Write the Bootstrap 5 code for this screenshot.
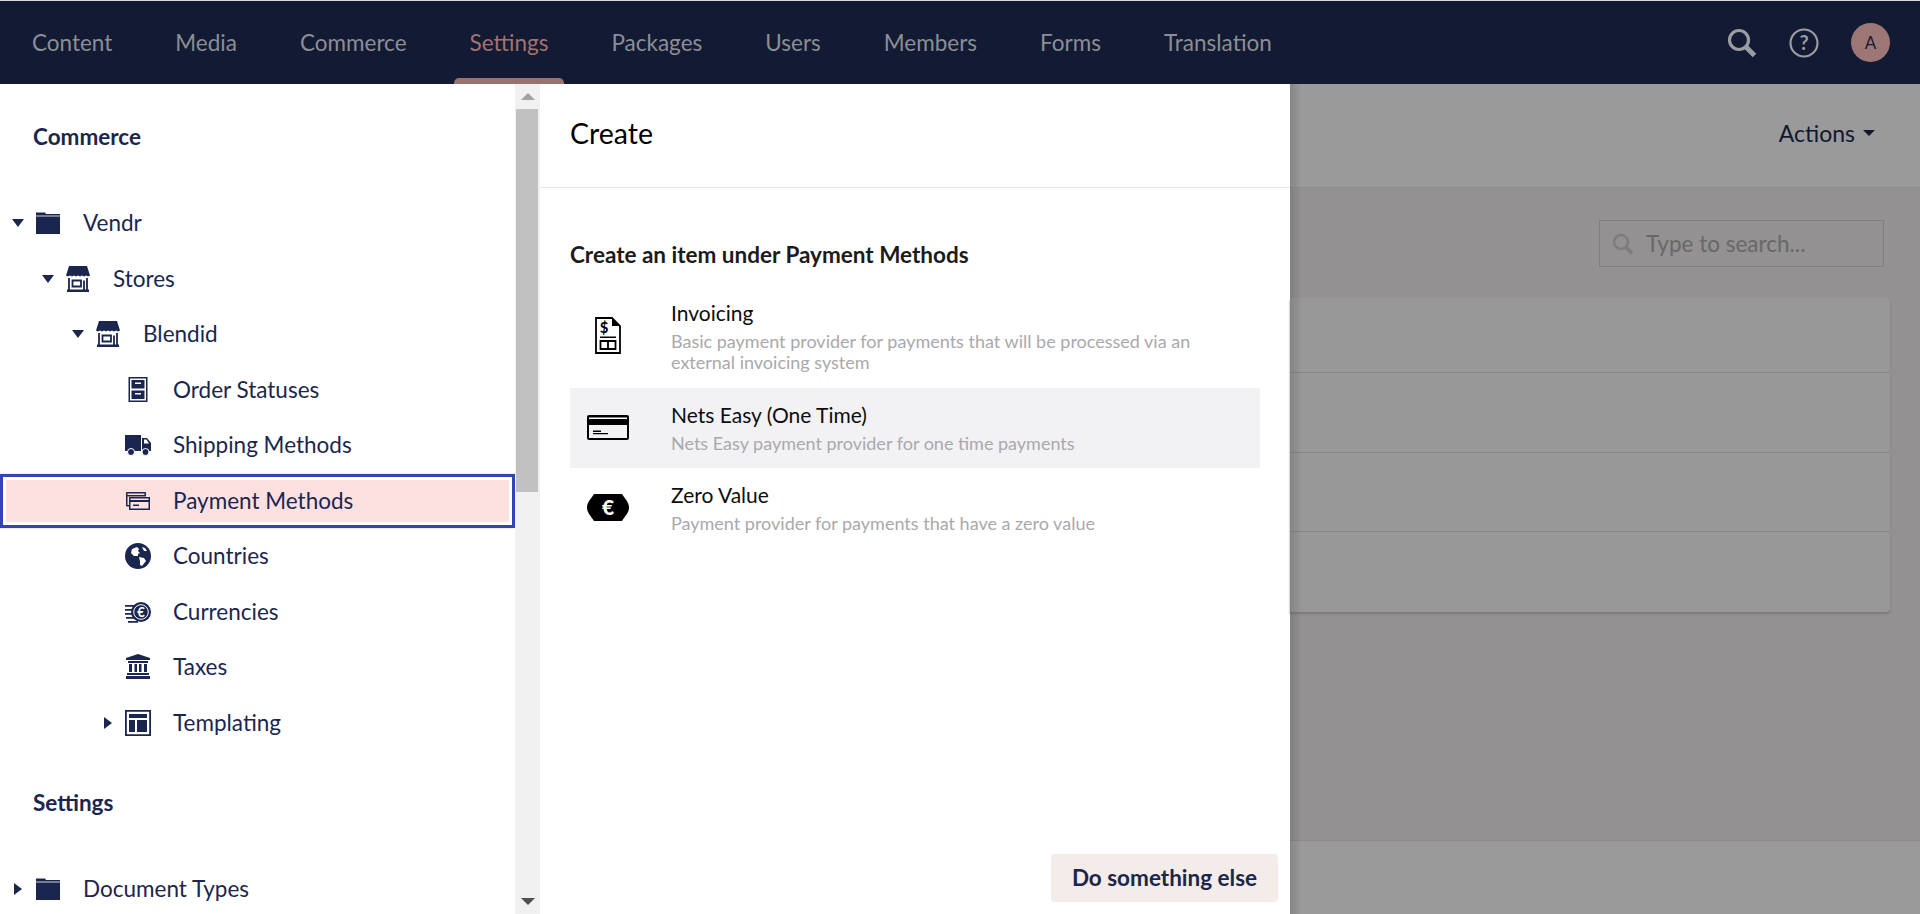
<!doctype html>
<html lang="en">
<head>
<meta charset="utf-8">
<title>Commerce – Create</title>
<link href="https://cdn.jsdelivr.net/npm/bootstrap@5.3.0/dist/css/bootstrap.min.css" rel="stylesheet">
<style>
html,body{height:100%;}
body{font-family:Lato,"Open Sans",sans-serif;overflow:hidden;background:#939191;color:#1b264f;}
.topbar{height:84px;background:#131a33;border-top:1px solid #d9d9d9;flex:none;}
.top-link{font-size:22.5px;color:#8c8e95;text-decoration:none;position:relative;height:83px;display:flex;align-items:center;}
.top-link.is-on{color:#a2736f;}
.top-link.is-on::after{content:"";position:absolute;left:-16px;right:-16px;bottom:0;height:6px;background:#9b716f;border-radius:5px 5px 0 0;}
.top-nav{padding-left:32px;gap:63px;}
.top-tools{gap:32px;padding-right:30px;}
.who{width:39px;height:39px;border-radius:50%;background:#9c7775;color:#131a33;font-size:17px;}
.work{min-height:0;}
.tree-side{width:515px;flex:none;background:#fff;overflow:hidden;}
.tree-title{font-size:22.5px;font-weight:700;padding-left:33px;line-height:26px;}
.tree-title.t1{margin-top:40px;margin-bottom:45.500px;}
.tree-title.t2{margin-top:39px;margin-bottom:46px;}
.tree-row{height:55.5px;font-size:22.5px;color:#1b264f;}
.tree-row.on{height:54px;margin:.75px 0;background:#fde1e1;box-shadow:inset 0 0 0 3px #3544b1,inset 0 0 0 6px #fff,0 0 2px #c5c9ea;position:relative;}
.lv0{padding-left:12px;}.lv1{padding-left:42px;}.lv2{padding-left:72px;}.lv3{padding-left:102px;}
.tw{width:12px;flex:none;margin-right:11px;display:flex;justify-content:center;}
.tico{width:26px;height:26px;flex:none;margin-right:22px;fill:#1b264f;}
.scroll-track{width:25px;flex:none;background:#f1f1f1;}
.scroll-up{height:25px;}
.scroll-thumb{height:383px;background:#c1c1c1;margin:0 2px 0 1px;}
.scroll-end{height:25px;margin-top:auto;}
.tri-u{border-left:7px solid transparent;border-right:7px solid transparent;border-bottom:7px solid #a3a3a3;}
.tri-d{border-left:7px solid transparent;border-right:7px solid transparent;border-top:7px solid #505050;}
.slide-panel{width:750px;flex:none;background:#fff;color:#000;}
.slide-head{height:104px;border-bottom:1px solid #e9e9eb;padding-left:30px;font-size:28.5px;line-height:32px;padding-bottom:5px;}
.slide-body{padding:0 30px;}
.under{font-size:22.5px;font-weight:700;color:#1b1b1b;margin:52px 0 20px;line-height:30px;}
.opt{height:80px;padding-bottom:2px;}
.opt.hot{background:#f2f2f4;}
.opt.first{height:98px;padding-bottom:7px;}
.opt-ico{width:101px;flex:none;display:flex;justify-content:center;padding-right:26px;}
.opt-name{font-size:21px;line-height:30px;color:#0d0d0d;margin-bottom:3px;}
.opt-desc{font-size:18px;line-height:21px;color:#a9a9ab;}
.do-else{background:#f3ece8;color:#1b264f;font-size:22.5px;font-weight:700;width:227px;height:48px;border:0;border-radius:4px;padding:0;}
.slide-foot{padding:0 12px 12px 0;}
.rest{background:#939191;position:relative;}
.rest::before{content:"";position:absolute;top:0;bottom:0;left:0;width:12px;background:linear-gradient(90deg,rgba(0,0,0,.13),rgba(0,0,0,0));}
.rest-head{height:104px;background:#9a9a9a;border-bottom:1px solid #8d8d8d;padding-right:45px;flex:none;}
.act{font-size:23px;color:#12172d;gap:8px;padding-bottom:5px;}
.act-tri{border-left:6px solid transparent;border-right:6px solid transparent;border-top:6px solid #12172d;}
.find-wrap{padding:32px 36px 31px 0;}
.find{width:285px;height:47px;border:1px solid #7f7f80;gap:12px;padding-left:12px;color:#686868;font-size:22.5px;}
.sheet{background:#989898;margin-right:30px;border-radius:0 4px 4px 0;box-shadow:0 2px 2px #7b7b7b;}
.sheet-row{border-bottom:1px solid #878787;}
.sheet-row:last-child{border-bottom:0;}
.sr1{height:75px;}.sr2{height:80px;}.sr3{height:79px;}.sr4{height:80px;}
.rest-foot{height:74px;background:#9a9a9a;border-top:1px solid #8b8b8b;margin-top:auto;flex:none;}
</style>
</head>
<body class="d-flex flex-column">
<header class="topbar d-flex justify-content-between align-items-center">
  <nav class="top-nav d-flex">
    <a class="top-link" href="#">Content</a>
    <a class="top-link" href="#">Media</a>
    <a class="top-link" href="#">Commerce</a>
    <a class="top-link is-on" href="#">Settings</a>
    <a class="top-link" href="#">Packages</a>
    <a class="top-link" href="#">Users</a>
    <a class="top-link" href="#">Members</a>
    <a class="top-link" href="#">Forms</a>
    <a class="top-link" href="#">Translation</a>
  </nav>
  <div class="top-tools d-flex align-items-center">
    <svg width="30" height="30" viewBox="0 0 30 30" aria-hidden="true"><circle cx="12" cy="12" r="9.5" fill="none" stroke="#9b9ca1" stroke-width="3.200"/><path d="M19 19l8.500 8.500" stroke="#9b9ca1" stroke-width="5"/></svg>
    <svg width="30" height="30" viewBox="0 0 30 30" aria-hidden="true"><circle cx="15" cy="15" r="13.500" fill="none" stroke="#9b9ca1" stroke-width="2.200"/><text x="15" y="22" text-anchor="middle" font-family="Lato,sans-serif" font-size="20" font-weight="700" fill="#9b9ca1">?</text></svg>
    <div class="who d-flex align-items-center justify-content-center">A</div>
  </div>
</header>
<main class="work d-flex flex-grow-1">
  <aside class="tree-side">
    <div class="tree-title t1">Commerce</div>
    <ul class="list-unstyled m-0">
      <li class="tree-row lv0 d-flex align-items-center"><span class="tw"><svg width="12" height="8" viewBox="0 0 12 8"><path d="M0 0h12L6 8z" fill="#1b264f"/></svg></span><svg class="tico" viewBox="0 0 26 26"><path d="M1 2.500h9l1 1.500h14v20H1z"/><path d="M1 6h24" stroke="#fff" stroke-width=".8"/></svg>Vendr</li>
      <li class="tree-row lv1 d-flex align-items-center"><span class="tw"><svg width="12" height="8" viewBox="0 0 12 8"><path d="M0 0h12L6 8z" fill="#1b264f"/></svg></span><svg class="tico" viewBox="0 0 26 26"><path d="M4 0h18l3 9.500-2 1-2-1-2 1-2-1-2 1-2-1-2 1-2-1-2 1-2-1-2 1-2-1z"/><path d="M4 12v12M22 12v12M7.500 14.500h8.500v6H7.500zM19 14.500V24" fill="none" stroke="#1b264f" stroke-width="1.800"/><path d="M2 23.500h22V26H2z"/></svg>Stores</li>
      <li class="tree-row lv2 d-flex align-items-center"><span class="tw"><svg width="12" height="8" viewBox="0 0 12 8"><path d="M0 0h12L6 8z" fill="#1b264f"/></svg></span><svg class="tico" viewBox="0 0 26 26"><path d="M4 0h18l3 9.500-2 1-2-1-2 1-2-1-2 1-2-1-2 1-2-1-2 1-2-1-2 1-2-1z"/><path d="M4 12v12M22 12v12M7.500 14.500h8.500v6H7.500zM19 14.500V24" fill="none" stroke="#1b264f" stroke-width="1.800"/><path d="M2 23.500h22V26H2z"/></svg>Blendid</li>
      <li class="tree-row lv3 d-flex align-items-center"><span class="tw"></span><svg class="tico" viewBox="0 0 26 26"><path fill-rule="evenodd" d="M3.500 0h19v25h-19zM5 1.500v22h16v-22zM6.500 3h13v8.500h-13zM6.500 13.500h13V22h-13z"/><path d="M10 5.500h6v1.500h-6zM10 16h6v1.500h-6z" fill="#fff"/></svg>Order Statuses</li>
      <li class="tree-row lv3 d-flex align-items-center"><span class="tw"></span><svg class="tico" viewBox="0 0 26 26"><path d="M0 3h16v16H0zM17 6h5l4 5v8h-9z"/><path d="M19 7.500h2.500l2.500 4h-5z" fill="#fff"/><circle cx="6" cy="20" r="3.500" stroke="#fff"/><circle cx="20.500" cy="20" r="3.500" stroke="#fff"/></svg>Shipping Methods</li>
      <li class="tree-row on lv3 d-flex align-items-center"><span class="tw"></span><svg class="tico" viewBox="0 0 26 26"><path d="M1 5q0-1 1-1h18q1 0 1 1v3h-1.500V5.500h-17V17H4v1.500H2q-1 0-1-1z"/><path d="M1 7h20v1.500H1z"/><path fill-rule="evenodd" d="M4 9h21v13H4zM5.500 14v6.500h18V14zM5.500 10.500V12h18v-1.500z"/><path d="M8 16.500h6V18H8z"/></svg>Payment Methods</li>
      <li class="tree-row lv3 d-flex align-items-center"><span class="tw"></span><svg class="tico" viewBox="0 0 26 26"><circle cx="13" cy="13" r="13"/><path d="M7 6l5-2 2 2-1 2 2 2-2 1v2l-4 0-3-3zM14 14l5 1 2 3-4 5-2-1v-4zM17 4l3 1 2 3-3 0-1-2z" fill="#fff"/></svg>Countries</li>
      <li class="tree-row lv3 d-flex align-items-center"><span class="tw"></span><svg class="tico" viewBox="0 0 26 26"><path d="M0 6h9v1.800H0zM0 10h7v1.800H0zM0 14h7v1.800H0zM1 18h8v1.800H1zM3 22h10v1.800H3z"/><circle cx="16" cy="13" r="10"/><circle cx="16" cy="13" r="7.300" fill="none" stroke="#fff" stroke-width="1"/><text x="16" y="18" text-anchor="middle" font-family="Lato,sans-serif" font-size="13" font-weight="700" fill="#fff">€</text></svg>Currencies</li>
      <li class="tree-row lv3 d-flex align-items-center"><span class="tw"></span><svg class="tico" viewBox="0 0 26 26"><path d="M13 0l12 4v2H1V4zM3 7h20v2H3zM4 10h3v8H4zM9.500 10h2.500v8H9.500zM14 10h2.500v8H14zM19 10h3v8h-3zM2 19h22v2H2zM1 22h24v3H1z"/></svg>Taxes</li>
      <li class="tree-row lv3 d-flex align-items-center"><span class="tw"><svg width="8" height="12" viewBox="0 0 8 12"><path d="M0 0l8 6-8 6z" fill="#1b264f"/></svg></span><svg class="tico" viewBox="0 0 26 26"><path fill-rule="evenodd" d="M0 0h26v26H0zM1.800 1.800v22.400h22.400V1.800z"/><path d="M4 4h18v4H4zM4 10h6v12H4zM12 10h10v12H12z"/></svg>Templating</li>
    </ul>
    <div class="tree-title t2">Settings</div>
    <ul class="list-unstyled m-0">
      <li class="tree-row lv0 d-flex align-items-center"><span class="tw"><svg width="8" height="12" viewBox="0 0 8 12"><path d="M0 0l8 6-8 6z" fill="#1b264f"/></svg></span><svg class="tico" viewBox="0 0 26 26"><path d="M1 2.500h9l1 1.500h14v20H1z"/><path d="M1 6h24" stroke="#fff" stroke-width=".8"/></svg>Document Types</li>
    </ul>
  </aside>
  <div class="scroll-track d-flex flex-column">
    <div class="scroll-up d-flex align-items-center justify-content-center"><span class="tri-u"></span></div>
    <div class="scroll-thumb"></div>
    <div class="scroll-end d-flex align-items-center justify-content-center"><span class="tri-d"></span></div>
  </div>
  <section class="slide-panel d-flex flex-column">
    <div class="slide-head d-flex align-items-center">Create</div>
    <div class="slide-body flex-grow-1">
      <div class="under">Create an item under Payment Methods</div>
      <div class="opt first d-flex align-items-center">
        <div class="opt-ico"><svg width="26" height="37" viewBox="0 0 26 37"><path d="M1 1h16l8 8v27H1z" fill="#fff" stroke="#000" stroke-width="1.800"/><path d="M17 1v8h8z"/><text x="9" y="16" text-anchor="middle" font-family="Lato,sans-serif" font-size="15" font-weight="700">$</text><path d="M5 19.500h16v1.500H5z"/><path d="M5.500 24h15v8h-15zM13 24v8" fill="none" stroke="#000" stroke-width="1.800"/></svg></div>
        <div><div class="opt-name">Invoicing</div><div class="opt-desc">Basic payment provider for payments that will be processed via an<br>external invoicing system</div></div>
      </div>
      <div class="opt hot d-flex align-items-center">
        <div class="opt-ico"><svg width="42" height="25" viewBox="0 0 42 25"><rect width="42" height="25" rx="2"/><path d="M2 2.500h38v1.500H2z" fill="#fff"/><path d="M2 10h38v13H2z" fill="#f2f2f4"/><path d="M6 15.500h8V17H6zM6 18h15v1.200H6z"/></svg></div>
        <div><div class="opt-name">Nets Easy (One Time)</div><div class="opt-desc">Nets Easy payment provider for one time payments</div></div>
      </div>
      <div class="opt d-flex align-items-center">
        <div class="opt-ico"><svg width="42" height="27" viewBox="0 0 42 27"><path d="M7 0h28c3 5 7 8 7 13.500s-4 8.500-7 13.500H7c-3-5-7-8-7-13.500S4 5 7 0z"/><text x="21" y="21" text-anchor="middle" font-family="Lato,sans-serif" font-size="21" font-weight="900" fill="#fff">€</text></svg></div>
        <div><div class="opt-name">Zero Value</div><div class="opt-desc">Payment provider for payments that have a zero value</div></div>
      </div>
    </div>
    <div class="slide-foot d-flex justify-content-end"><button class="do-else btn" type="button">Do something else</button></div>
  </section>
  <section class="rest d-flex flex-column flex-grow-1">
    <div class="rest-head d-flex align-items-center justify-content-end">
      <div class="act d-flex align-items-center">Actions <span class="act-tri"></span></div>
    </div>
    <div class="find-wrap d-flex justify-content-end">
      <div class="find d-flex align-items-center">
        <svg width="22" height="22" viewBox="0 0 22 22" aria-hidden="true"><circle cx="9" cy="9" r="7" fill="none" stroke="#7d7d7d" stroke-width="2.400"/><path d="M14 14l6 6.500" stroke="#7d7d7d" stroke-width="3.600"/></svg>
        <span>Type to search...</span>
      </div>
    </div>
    <div class="sheet">
      <div class="sheet-row sr1"></div>
      <div class="sheet-row sr2"></div>
      <div class="sheet-row sr3"></div>
      <div class="sheet-row sr4"></div>
    </div>
    <div class="rest-foot"></div>
  </section>
</main>
<script src="https://cdn.jsdelivr.net/npm/bootstrap@5.3.0/dist/js/bootstrap.bundle.min.js"></script>
</body>
</html>
